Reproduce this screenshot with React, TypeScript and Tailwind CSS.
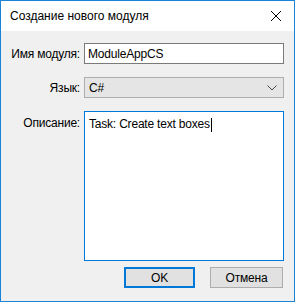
import { ReactNode } from "react";

// Row label, right-aligned against the input column
function FieldLabel({ children, top = false }: { children: ReactNode; top?: boolean }) {
  return (
    <div className={`w-[80px] shrink-0 text-right pr-[1px] ${top ? "pt-[3px]" : ""}`}>
      {children}
    </div>
  );
}

export default function App() {
  return (
    <div
      className="w-[295px] h-[302px] flex flex-col border border-[#1883d7] bg-[#f0f0f0] text-[12px] tracking-[-0.2px] text-black"
      style={{ fontFamily: '"Liberation Sans", Arial, sans-serif' }}
    >
      {/* TITLE BAR */}
      <div className="h-[30px] shrink-0 bg-white flex items-center justify-between pl-[9px] pr-[9px]">
        <span className="text-[12px] tracking-normal">Создание нового модуля</span>
        <svg width="12" height="12" viewBox="0 0 12 12" className="mr-[3px]">
          <path d="M1 1 L11 11 M11 1 L1 11" stroke="#000" strokeWidth="1" />
        </svg>
      </div>

      {/* BODY */}
      <div className="flex-1 flex flex-col pt-[12px] pr-[10px] pb-[12px]">

        {/* MODULE NAME */}
        <div className="flex items-center">
          <FieldLabel>Имя модуля:</FieldLabel>
          <div className="flex-1 ml-[3px] h-[21px] bg-white border border-[#7a7a7a] flex items-center px-[3px]">
            ModuleAppCS
          </div>
        </div>

        {/* LANGUAGE */}
        <div className="flex items-center mt-[13px]">
          <FieldLabel>Язык:</FieldLabel>
          <div className="flex-1 ml-[3px] h-[21px] bg-[#e5e5e5] border border-[#adadad] flex items-center justify-between pl-[4px] pr-[6px]">
            <span>C#</span>
            <svg width="10" height="6" viewBox="0 0 10 6">
              <path d="M0.5 0.5 L5 5 L9.5 0.5" stroke="#444" strokeWidth="1" fill="none" />
            </svg>
          </div>
        </div>

        {/* DESCRIPTION */}
        <div className="flex mt-[13px]">
          <FieldLabel top>Описание:</FieldLabel>
          <div className="flex-1 ml-[3px] h-[150px] bg-white border border-[#0078d7] px-[4px] pt-[3px]">
            <span>Task: Create text boxes</span>
            <span className="inline-block w-px h-[14px] bg-black align-middle ml-px" />
          </div>
        </div>

        {/* BUTTONS */}
        <div className="flex justify-end gap-[15px] mt-[6px] mr-[1px]">
          <button className="w-[71px] h-[21px] bg-[#e1e1e1] border-2 border-[#0078d7] flex items-center justify-center">
            OK
          </button>
          <button className="w-[73px] h-[21px] bg-[#e1e1e1] border border-[#adadad] flex items-center justify-center">
            Отмена
          </button>
        </div>
      </div>
    </div>
  );
}
